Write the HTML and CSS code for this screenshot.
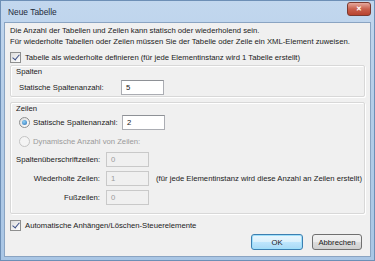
FILE: index.html
```html
<!DOCTYPE html>
<html lang="de">
<head>
    <meta charset="UTF-8">
    <title>Neue Tabelle</title>
    <link rel="stylesheet" href="styles.css">
</head>
<body>
    <div class="window">
        <!-- Title bar -->
        <div class="titlebar">
            <span class="title">Neue Tabelle</span>
            <span class="close">&#x2715;</span>
        </div>

        <div class="content">
            <p class="intro">Die Anzahl der Tabellen und Zeilen kann statisch oder wiederholend sein.<br>Für wiederholte Tabellen oder Zeilen müssen Sie der Tabelle oder Zeile ein XML-Element zuweisen.</p>

            <label class="check-row">
                <span class="checkbox checked"></span>
                Tabelle als wiederholte definieren (für jede Elementinstanz wird 1 Tabelle erstellt)
            </label>

            <!-- Spalten -->
            <div class="group group-cols">
                <div class="group-title">Spalten</div>
                <div class="field-row indent">
                    <span class="field-label">Statische Spaltenanzahl:</span>
                    <span class="input">5</span>
                </div>
            </div>

            <!-- Zeilen -->
            <div class="group group-rows">
                <div class="group-title">Zeilen</div>
                <div class="field-row radio-row">
                    <span class="radio selected"></span>
                    <span class="field-label">Statische Spaltenanzahl:</span>
                    <span class="input">2</span>
                </div>
                <div class="field-row radio-row second disabled">
                    <span class="radio"></span>
                    <span>Dynamische Anzahl von Zeilen:</span>
                </div>
                <div class="sub-grid">
                    <span class="sub-label">Spaltenüberschriftzeilen:</span>
                    <span class="input off">0</span>
                    <span></span>
                    <span class="sub-label">Wiederholte Zeilen:</span>
                    <span class="input off">1</span>
                    <span class="note">(für jede Elementinstanz wird diese Anzahl an Zeilen erstellt)</span>
                    <span class="sub-label">Fußzeilen:</span>
                    <span class="input off">0</span>
                    <span></span>
                </div>
            </div>

            <label class="check-row auto-row">
                <span class="checkbox checked"></span>
                Automatische Anhängen/Löschen-Steuerelemente
            </label>

            <div class="buttons">
                <button class="btn default">OK</button>
                <button class="btn">Abbrechen</button>
            </div>
        </div>
    </div>
</body>
</html>
```

FILE: styles.css
```css
/* Page */
body {
    margin: 0;
    padding: 0;
    font-family: "Liberation Sans", Arial, sans-serif;
    font-size: 7.7px;
    color: #1a1a1a;
    white-space: nowrap;
}

/* Window frame */
.window {
    width: 375px;
    height: 261px;
    box-sizing: border-box;
    display: flex;
    flex-direction: column;
    padding: 0 3px 3px 3px;
    background: linear-gradient(to bottom, #c2d7ee, #b4cde8 40%, #a9c6e5);
    border: 1px solid #6d8fb6;
    overflow: hidden;
}

.titlebar {
    height: 21px;
    flex-shrink: 0;
    display: flex;
    align-items: center;
    justify-content: space-between;
    padding-left: 4px;
}

.title {
    font-size: 8.4px;
    color: #1e2a3a;
}

.close {
    width: 22px;
    height: 12px;
    margin-top: -5px;
    display: flex;
    align-items: center;
    justify-content: center;
    background: linear-gradient(to bottom, #e6a99d, #c9604d 50%, #b8432f);
    border: 1px solid #7a3a30;
    border-radius: 3px;
    color: white;
    font-size: 7px;
    font-weight: bold;
}

/* Client area */
.content {
    flex: 1;
    background-color: #f0f0f0;
    border: 1px solid #8aa4c2;
    padding: 2px 5px 0 5px;
    display: flex;
    flex-direction: column;
}

.intro {
    margin: 0;
    height: 22px;
    line-height: 11px;
    flex-shrink: 0;
}

.check-row {
    display: flex;
    align-items: center;
    gap: 4px;
    height: 12px;
    margin-top: 4px;
    flex-shrink: 0;
}

/* Checkbox and radio */
.checkbox {
    width: 9px;
    height: 9px;
    border: 1px solid #8e8f8f;
    background: linear-gradient(to bottom right, #dcdcdc, #ffffff);
    position: relative;
    flex-shrink: 0;
}

.checkbox.checked::after {
    content: "";
    position: absolute;
    left: 3px;
    top: 0px;
    width: 3px;
    height: 6px;
    border: solid #3b4f86;
    border-width: 0 1.5px 1.5px 0;
    transform: rotate(40deg);
}

.radio {
    width: 9px;
    height: 9px;
    border: 1px solid #8e8f8f;
    border-radius: 50%;
    background: linear-gradient(to bottom right, #dcdcdc, #ffffff);
    position: relative;
    flex-shrink: 0;
}

.radio.selected::after {
    content: "";
    position: absolute;
    left: 2px;
    top: 2px;
    width: 5px;
    height: 5px;
    border-radius: 50%;
    background: radial-gradient(circle at 40% 35%, #8fd0f5, #2a6fb5);
}

/* Group boxes */
.group {
    box-sizing: border-box;
    flex-shrink: 0;
    border: 1px solid #d8d8d8;
    box-shadow: inset 1px 1px 0 #ffffff, 1px 1px 0 #ffffff;
    border-radius: 2px;
    padding: 0 5px;
}

.group-cols {
    margin-top: 2px;
    height: 32px;
}

.group-rows {
    margin-top: 5px;
    height: 112px;
}

.group-title {
    height: 11px;
    line-height: 11px;
}

.field-row {
    display: flex;
    align-items: center;
    height: 16px;
}

.indent {
    padding-left: 3px;
    margin-top: 2px;
}

.field-row .field-label {
    width: 102px;
}

.radio-row {
    gap: 3px;
    padding-left: 3px;
}

.radio-row .field-label {
    width: 86px;
}

.radio-row.second {
    margin-top: 3px;
}

.disabled {
    color: #9a9a9a;
}

.disabled .radio {
    border-color: #c4c4c4;
    background: #f4f4f4;
}

/* Text boxes */
.input {
    width: 37px;
    height: 13px;
    line-height: 13px;
    padding-left: 4px;
    border: 1px solid #abadb3;
    border-top-color: #8e9196;
    background: white;
}

.input.off {
    background: #f0f0f0;
    border-color: #c9c9c9;
    color: #9a9a9a;
}

.sub-grid {
    display: grid;
    grid-template-columns: 84px 42px 1fr;
    column-gap: 6px;
    row-gap: 4px;
    align-items: center;
    margin-top: 3px;
}

.sub-label {
    text-align: right;
}

.note {
    padding-left: 2px;
}

.auto-row {
    margin-top: 5px;
}

/* Buttons */
.buttons {
    display: flex;
    justify-content: flex-end;
    gap: 9px;
    margin-top: 3px;
    padding-right: 3px;
}

.btn {
    width: 50px;
    height: 16px;
    padding: 0;
    font-family: inherit;
    font-size: 7.7px;
    color: #1a1a1a;
    border: 1px solid #707070;
    border-radius: 3px;
    background: linear-gradient(to bottom, #f2f2f2 0%, #ebebeb 50%, #dddddd 51%, #cfcfcf 100%);
}

.btn.default {
    width: 52px;
    border-color: #3c7fb1;
    background: linear-gradient(to bottom, #eaf6fd 0%, #d9f0fc 50%, #bee6fd 51%, #a7d9f5 100%);
    box-shadow: inset 0 0 0 1px #9fe0fb;
}
```
